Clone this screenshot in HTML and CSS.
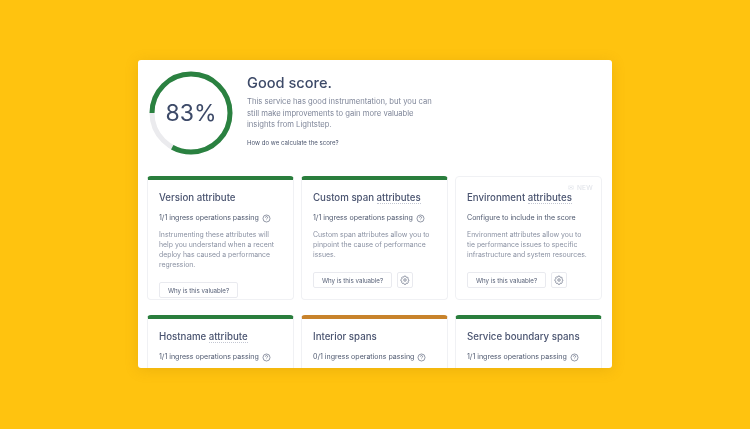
FILE: index.html
```html
<!DOCTYPE html>
<html lang="en">
<head>
<meta charset="utf-8">
<title>Service score</title>
<link rel="stylesheet" href="styles.css">
</head>
<body>
<main class="panel">
  <section class="summary">
    <div class="gauge">
      <svg class="gauge-ring" viewBox="0 0 84 84" width="84" height="84" aria-hidden="true">
        <circle class="ring-track" cx="42" cy="42" r="39"/>
        <circle class="ring-value" cx="42" cy="42" r="39" pathLength="100" stroke-dasharray="83 17" transform="rotate(180 42 42)"/>
      </svg>
      <span class="gauge-label">83%</span>
    </div>
    <div class="summary-text">
      <h1>Good score.</h1>
      <p>This service has good instrumentation, but you can still make improvements to gain more valuable insights from Lightstep.</p>
      <a class="how">How do we calculate the score?</a>
    </div>
  </section>
  <section class="grid">
    <article class="card pass">
      <h2>Version attribute</h2>
      <div class="status">1/1 ingress operations passing <svg class="help" viewBox="0 0 10 10"><circle cx="5" cy="5" r="3.9"/><path d="M3.8 4a1.2 1.2 0 1 1 1.7 1.1c-.4.2-.5.4-.5.8M5 7.2v.1"/></svg></div>
      <p>Instrumenting these attributes will help you understand when a recent deploy has caused a performance regression.</p>
      <div class="actions"><button class="why">Why is this valuable?</button></div>
    </article>
    <article class="card pass">
      <h2>Custom span <span class="dotted">attributes</span></h2>
      <div class="status">1/1 ingress operations passing <svg class="help" viewBox="0 0 10 10"><circle cx="5" cy="5" r="3.9"/><path d="M3.8 4a1.2 1.2 0 1 1 1.7 1.1c-.4.2-.5.4-.5.8M5 7.2v.1"/></svg></div>
      <p>Custom span attributes allow you to pinpoint the cause of performance issues.</p>
      <div class="actions"><button class="why">Why is this valuable?</button><button class="gear"><svg viewBox="0 0 12 12"><circle cx="6" cy="6" r="1.5"/><path d="M6 1.300l1 .2.3 1 .9.5 1-.3.7.8-.3 1 .1.5.9.9v1.200l-.9.6-.2.6.3 1-.7.8-1-.3-.9.4-.3 1H5.100l-.4-1-.8-.4-1 .3-.8-.8.3-1-.4-.7-.9-.5V5.400l.9-.6.4-.7-.3-1 .8-.8 1 .3.8-.4.4-1z"/></svg></button></div>
    </article>
    <article class="card plain">
      <span class="new">✉ NEW</span>
      <h2>Environment <span class="dotted">attributes</span></h2>
      <div class="status">Configure to include in the score</div>
      <p>Environment attributes allow you to tie performance issues to specific infrastructure and system resources.</p>
      <div class="actions"><button class="why">Why is this valuable?</button><button class="gear"><svg viewBox="0 0 12 12"><circle cx="6" cy="6" r="1.5"/><path d="M6 1.300l1 .2.3 1 .9.5 1-.3.7.8-.3 1 .1.5.9.9v1.200l-.9.6-.2.6.3 1-.7.8-1-.3-.9.4-.3 1H5.100l-.4-1-.8-.4-1 .3-.8-.8.3-1-.4-.7-.9-.5V5.400l.9-.6.4-.7-.3-1 .8-.8 1 .3.8-.4.4-1z"/></svg></button></div>
    </article>
    <article class="card pass">
      <h2>Hostname <span class="dotted">attribute</span></h2>
      <div class="status">1/1 ingress operations passing <svg class="help" viewBox="0 0 10 10"><circle cx="5" cy="5" r="3.9"/><path d="M3.8 4a1.2 1.2 0 1 1 1.7 1.1c-.4.2-.5.4-.5.8M5 7.2v.1"/></svg></div>
    </article>
    <article class="card warn">
      <h2>Interior spans</h2>
      <div class="status">0/1 ingress operations passing <svg class="help" viewBox="0 0 10 10"><circle cx="5" cy="5" r="3.9"/><path d="M3.8 4a1.2 1.2 0 1 1 1.7 1.1c-.4.2-.5.4-.5.8M5 7.2v.1"/></svg></div>
    </article>
    <article class="card pass">
      <h2>Service boundary spans</h2>
      <div class="status">1/1 ingress operations passing <svg class="help" viewBox="0 0 10 10"><circle cx="5" cy="5" r="3.9"/><path d="M3.8 4a1.2 1.2 0 1 1 1.7 1.1c-.4.2-.5.4-.5.8M5 7.2v.1"/></svg></div>
    </article>
  </section>
</main>
</body>
</html>
```
FILE: styles.css
```css
* { box-sizing: border-box; }
html, body { height: 100%; }
body {
  margin: 0;
  background: #ffc30f;
  font-family: Inter, "Liberation Sans", sans-serif;
  display: flex;
  align-items: center;
  justify-content: center;
  overflow: hidden;
}
.panel {
  width: 474px;
  height: 308px;
  margin-bottom: 1px;
  background: #fff;
  border-radius: 3px;
  overflow: hidden;
  box-shadow: 0 2px 14px rgba(160, 110, 0, .2);
}
.summary, .grid { filter: blur(.3px); }
.summary {
  display: flex;
  height: 116px;
  padding: 11px 0 0 11px;
}
.gauge {
  position: relative;
  width: 84px;
  height: 84px;
  flex: none;
}
.gauge-ring { display: block; }
.ring-track, .ring-value { fill: none; stroke-width: 5px; }
.ring-track { stroke: #ebebee; }
.ring-value { stroke: #2a8140; }
.gauge-label {
  position: absolute;
  inset: 0;
  display: flex;
  align-items: center;
  justify-content: center;
  font-size: 23px;
  font-weight: 400;
  color: #3d4a68;
}
.summary-text { margin-left: 14px; }
h1 {
  margin: 0;
  font-size: 14.600px;
  line-height: 24px;
  font-weight: 500;
  color: #3d4a68;
}
.summary-text p {
  margin: 1px 0 0;
  width: 195px;
  font-size: 7.650px;
  line-height: 11.700px;
  color: #7f8699;
}
.how {
  display: block;
  margin-top: 7px;
  font-size: 6.100px;
  line-height: 9px;
  color: #4e5870;
}
.grid {
  display: grid;
  grid-template-columns: repeat(3, 147px);
  grid-auto-rows: 124px;
  column-gap: 7px;
  row-gap: 15px;
  padding-left: 9px;
}
.card {
  position: relative;
  border: 1px solid #f0f1f4;
  border-radius: 4px;
  padding: 14px 11px 0;
}
.pass, .warn { border-top: 4px solid #2a7e3d; padding-top: 11px; }
.warn { border-top-color: #c8832b; }
h2 {
  margin: 0;
  font-size: 9.700px;
  line-height: 14px;
  font-weight: 500;
  color: #4a5470;
}
.dotted { border-bottom: 1px dotted #c3c7d2; }
.status {
  display: flex;
  align-items: center;
  gap: 3px;
  margin-top: 8px;
  font-size: 7.050px;
  line-height: 10px;
  color: #4f596f;
}
.help {
  width: 9px;
  height: 9px;
  fill: none;
  stroke: #566076;
  stroke-width: .7px;
}
.card p {
  margin: 7px 0 0;
  font-size: 6.900px;
  line-height: 10px;
  color: #8a91a2;
}
.actions {
  display: flex;
  gap: 5px;
  margin-top: 12px;
}
.why {
  width: 79px;
  height: 16px;
  padding: 0;
  background: #fff;
  border: 1px solid #e9eaef;
  border-radius: 2px;
  font: 400 6.200px Inter, "Liberation Sans", sans-serif;
  color: #535d74;
}
.gear {
  width: 16px;
  height: 16px;
  padding: 0;
  background: #fff;
  border: 1px solid #e9eaef;
  border-radius: 2px;
  display: flex;
  align-items: center;
  justify-content: center;
}
.gear svg {
  width: 10px;
  height: 10px;
  fill: none;
  stroke: #6b7387;
  stroke-width: .9px;
}
.new {
  position: absolute;
  right: 8px;
  top: 7px;
  font-size: 6.500px;
  letter-spacing: .3px;
  color: #dfe2e8;
}
```
